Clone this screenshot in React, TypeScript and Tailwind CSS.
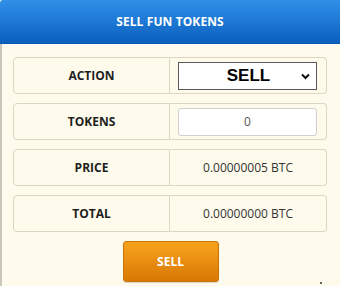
import React from "react";

const Row = ({ label, children }: { label: string; children: React.ReactNode }) => (
  <div className="grid grid-cols-2 h-[37px]">
    <div className="flex items-center justify-center border border-[#dcd7c3] rounded-l-[4px] text-[12px] font-bold text-[#1f1f1f]">
      {label}
    </div>
    <div className="flex items-center justify-center border border-l-0 border-[#dcd7c3] rounded-r-[4px]">
      {children}
    </div>
  </div>
);

export default function App() {
  return (
    <div
      className="w-[340px] h-[286px] bg-[#fefbec] relative overflow-hidden"
      style={{ fontFamily: '"Open Sans", "Noto Sans", sans-serif' }}
    >
      <div className="h-[44px] flex items-center justify-center bg-gradient-to-b from-[#3090e8] to-[#0a5fbf] rounded-tl-[3px] border-b border-[#0a55ad]">
        <span className="text-white font-bold text-[12px] tracking-[0.1px] pt-[1px]">SELL FUN TOKENS</span>
      </div>
      <div className="border-l-2 border-[#c9c6bb] h-[242px] flex flex-col">
        <div className="pt-[13px] pl-[11px] pr-[13px] flex flex-col gap-[9px]">
          <Row label="ACTION">
            <div className="w-[139px] h-[28px] ml-[-1px] bg-white border border-[#5a5a5a] flex items-center relative">
              <span
                className="flex-1 text-center font-bold text-[17px] text-black pl-[2px]"
                style={{ fontFamily: '"Liberation Sans", Arial, sans-serif' }}
              >
                SELL
              </span>
              <svg className="absolute right-[6px] top-[10px]" width="9" height="7" viewBox="0 0 9 7">
                <path d="M1 1.5 L4.5 5 L8 1.5" stroke="#111" strokeWidth="2" fill="none" />
              </svg>
            </div>
          </Row>
          <Row label="TOKENS">
            <div className="w-[139px] h-[28px] ml-[-1px] bg-white border border-[#cfcfcf] rounded-[3px] flex items-center justify-center text-[12px] text-[#555]">
              0
            </div>
          </Row>
          <Row label="PRICE">
            <span className="text-[12px] text-[#333]">0.00000005 BTC</span>
          </Row>
          <Row label="TOTAL">
            <span className="text-[12px] text-[#333]">0.00000000 BTC</span>
          </Row>
        </div>
        <div className="flex justify-center pt-[9px] pr-[1px]">
          <button className="w-[96px] h-[41px] rounded-[3px] border border-[#c9740a] bg-gradient-to-b from-[#f7a31c] to-[#d97804] text-white font-bold text-[12px] shadow-[0_1px_1px_rgba(0,0,0,0.15)]">
            SELL
          </button>
        </div>
      </div>
      <div className="absolute left-[320px] top-[282px] w-[2px] h-[2px] bg-[#333] rounded-full" />
    </div>
  );
}
